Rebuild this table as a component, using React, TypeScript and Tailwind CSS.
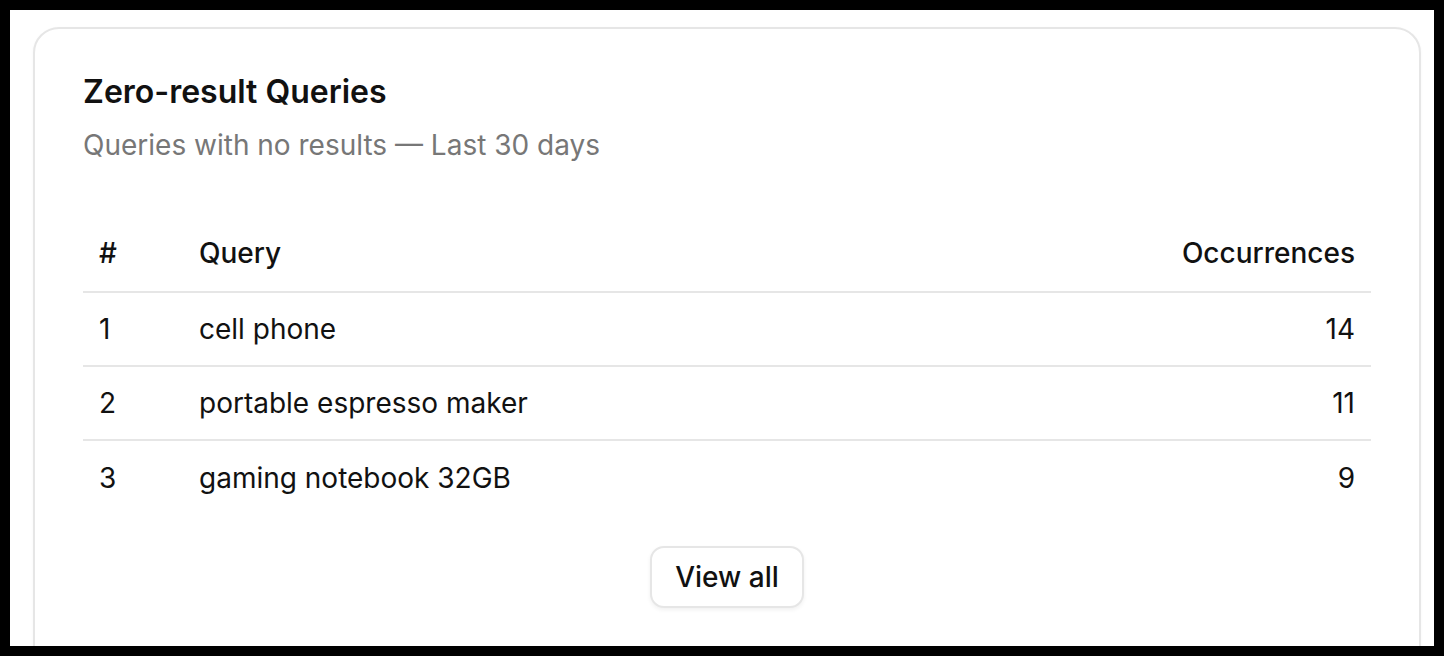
import React from 'react';

interface ZeroQuery {
  rank: number;
  query: string;
  count: number;
}

const rows: ZeroQuery[] = [
  { rank: 1, query: 'cell phone', count: 14 },
  { rank: 2, query: 'portable espresso maker', count: 11 },
  { rank: 3, query: 'gaming notebook 32GB', count: 9 },
];

const App: React.FC = () => {
  return (
    <div className="w-[1444px] h-[656px] bg-black p-[10px] font-['Inter',sans-serif]">
      <div className="w-full h-full bg-white overflow-hidden pl-[23px] pr-[13px] pt-[17px]">
        <div className="rounded-[26px] border-2 border-[#e6e6e6] bg-white px-12 pt-12 pb-16 shadow-[0_1px_3px_rgba(0,0,0,0.04)]">
          <h2 className="text-[32px] leading-[30px] font-semibold text-[#111111]">Zero-result Queries</h2>
          <p className="mt-5 text-[28px] leading-[36px] text-[#777777]">
            Queries with no results — Last 30 days
          </p>

          <table className="mt-[52px] w-full border-collapse text-[28px] text-[#111111]">
            <thead>
              <tr className="h-[77px] border-b-2 border-[#e6e6e6]">
                <th className="w-[116px] pl-4 text-left font-medium">#</th>
                <th className="text-left font-medium">Query</th>
                <th className="pr-4 text-right font-medium">Occurrences</th>
              </tr>
            </thead>
            <tbody>
              {rows.map((r, i) => (
                <tr
                  key={r.rank}
                  className={i < rows.length - 1 ? 'h-[74px] border-b-2 border-[#e6e6e6]' : 'h-[74px]'}
                >
                  <td className="pl-4">{r.rank}</td>
                  <td>{r.query}</td>
                  <td className="pr-4 text-right">{r.count}</td>
                </tr>
              ))}
            </tbody>
          </table>

          <div className="mt-8 flex justify-center">
            <button className="w-[154px] h-[62px] rounded-[14px] border-2 border-[#e6e6e6] bg-white text-[28px] font-medium text-[#111111] shadow-[0_2px_4px_rgba(0,0,0,0.06)]">
              View all
            </button>
          </div>
        </div>
      </div>
    </div>
  );
};

export default App;
